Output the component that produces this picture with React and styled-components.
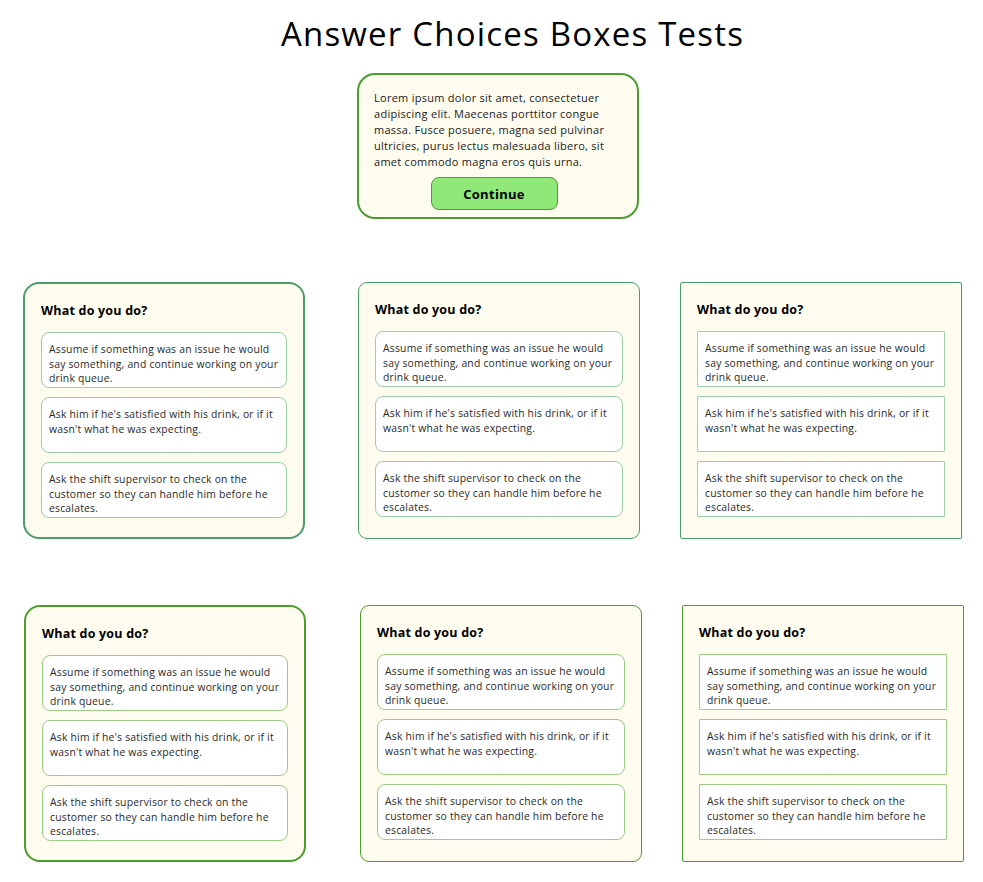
import React from "react";
import styled, { createGlobalStyle } from "styled-components";

const Global = createGlobalStyle`
  html, body { margin: 0; padding: 0; background: #ffffff; }
  body { font-family: "Open Sans", "Noto Sans", sans-serif; color: #111; }
  * { box-sizing: border-box; }
`;

const Page = styled.div`
  width: 983px;
  min-height: 882px;
  padding-top: 12px;
`;

const Title = styled.h1`
  margin: 0;
  padding-left: 42px;
  text-align: center;
  font-weight: 400;
  font-size: 33px;
  line-height: 44px;
  letter-spacing: 1.2px;
  color: #000;
`;

const Intro = styled.div`
  width: 282px;
  margin: 17px 0 0 357px;
  background: #fdfcee;
  border: 2px solid #4b9d30;
  border-radius: 18px;
  padding: 15px 23px 7px 15px;
  display: flex;
  flex-direction: column;
  align-items: center;
`;

const IntroText = styled.p`
  margin: 0;
  font-size: 11px;
  line-height: 16px;
  letter-spacing: 0.27px;
  color: #222;
  align-self: stretch;
  white-space: nowrap;
`;

const Line = styled.span`
  display: block;
`;

const ContinueButton = styled.button`
  margin-top: 7px;
  width: 127px;
  height: 33px;
  background: #90e878;
  border: 1.5px solid #4b9d30;
  border-radius: 8px;
  font-family: inherit;
  font-weight: 700;
  font-size: 13px;
  letter-spacing: 0.3px;
  color: #000;
  cursor: pointer;
`;

const Row = styled.div`
  display: flex;
  margin-top: ${(p) => p.$top}px;
  padding-left: ${(p) => p.$left}px;
`;

const radii = { round: 16, soft: 9, square: 2 };

const Card = styled.div`
  width: 282px;
  height: 257px;
  margin-left: ${(p) => p.$gap || 0}px;
  background: #fdfcee;
  border: ${(p) => (p.$shape === "round" ? 2 : 1.6)}px solid ${(p) => p.$color};
  border-radius: ${(p) => radii[p.$shape]}px;
  padding: 18px 16px 0 16px;
  display: flex;
  flex-direction: column;
`;

const Question = styled.h2`
  margin: 0 0 12px 0;
  font-size: 12.5px;
  line-height: 18px;
  font-weight: 700;
  letter-spacing: 0.2px;
  color: #000;
`;

const Options = styled.div`
  display: flex;
  flex-direction: column;
  gap: 9px;
`;

const Option = styled.div`
  height: 56px;
  background: #ffffff;
  border: 1px solid ${(p) => p.$color};
  border-radius: ${(p) => (p.$shape === "square" ? 1 : 8)}px;
  padding: 9px 4px 0 7px;
  font-size: 10.4px;
  line-height: 14.6px;
  letter-spacing: 0.2px;
  color: #2a2a2a;
  white-space: nowrap;
`;

const INTRO = [
  "Lorem ipsum dolor sit amet, consectetuer",
  "adipiscing elit. Maecenas porttitor congue",
  "massa. Fusce posuere, magna sed pulvinar",
  "ultricies, purus lectus malesuada libero, sit",
  "amet commodo magna eros quis urna.",
];

const CHOICES = [
  ["Assume if something was an issue he would", "say something, and continue working on your", "drink queue."],
  ["Ask him if he's satisfied with his drink, or if it", "wasn't what he was expecting."],
  ["Ask the shift supervisor to check on the", "customer so they can handle him before he", "escalates."],
];

function QuestionCard({ shape, color, optColor, gap }) {
  return (
    <Card $shape={shape} $color={color} $gap={gap}>
      <Question>What do you do?</Question>
      <Options>
        {CHOICES.map((lines) => (
          <Option key={lines[0]} $shape={shape} $color={optColor}>
            {lines.map((l) => (
              <Line key={l}>{l}</Line>
            ))}
          </Option>
        ))}
      </Options>
    </Card>
  );
}

export default function App() {
  return (
    <Page>
      <Global />
      <Title>Answer Choices Boxes Tests</Title>
      <Intro>
        <IntroText>
          {INTRO.map((l) => (
            <Line key={l}>{l}</Line>
          ))}
        </IntroText>
        <ContinueButton>Continue</ContinueButton>
      </Intro>
      <Row $top={63} $left={23}>
        <QuestionCard shape="round" color="#4c9e68" optColor="#9ccfa8" />
        <QuestionCard shape="soft" color="#4c9e68" optColor="#9ccfa8" gap={53} />
        <QuestionCard shape="square" color="#4c9e68" optColor="#9ccfa8" gap={40} />
      </Row>
      <Row $top={66} $left={24}>
        <QuestionCard shape="round" color="#4c9e2c" optColor="#9ccd84" />
        <QuestionCard shape="soft" color="#4c9e2c" optColor="#9ccd84" gap={54} />
        <QuestionCard shape="square" color="#4c9e2c" optColor="#9ccd84" gap={40} />
      </Row>
    </Page>
  );
}
